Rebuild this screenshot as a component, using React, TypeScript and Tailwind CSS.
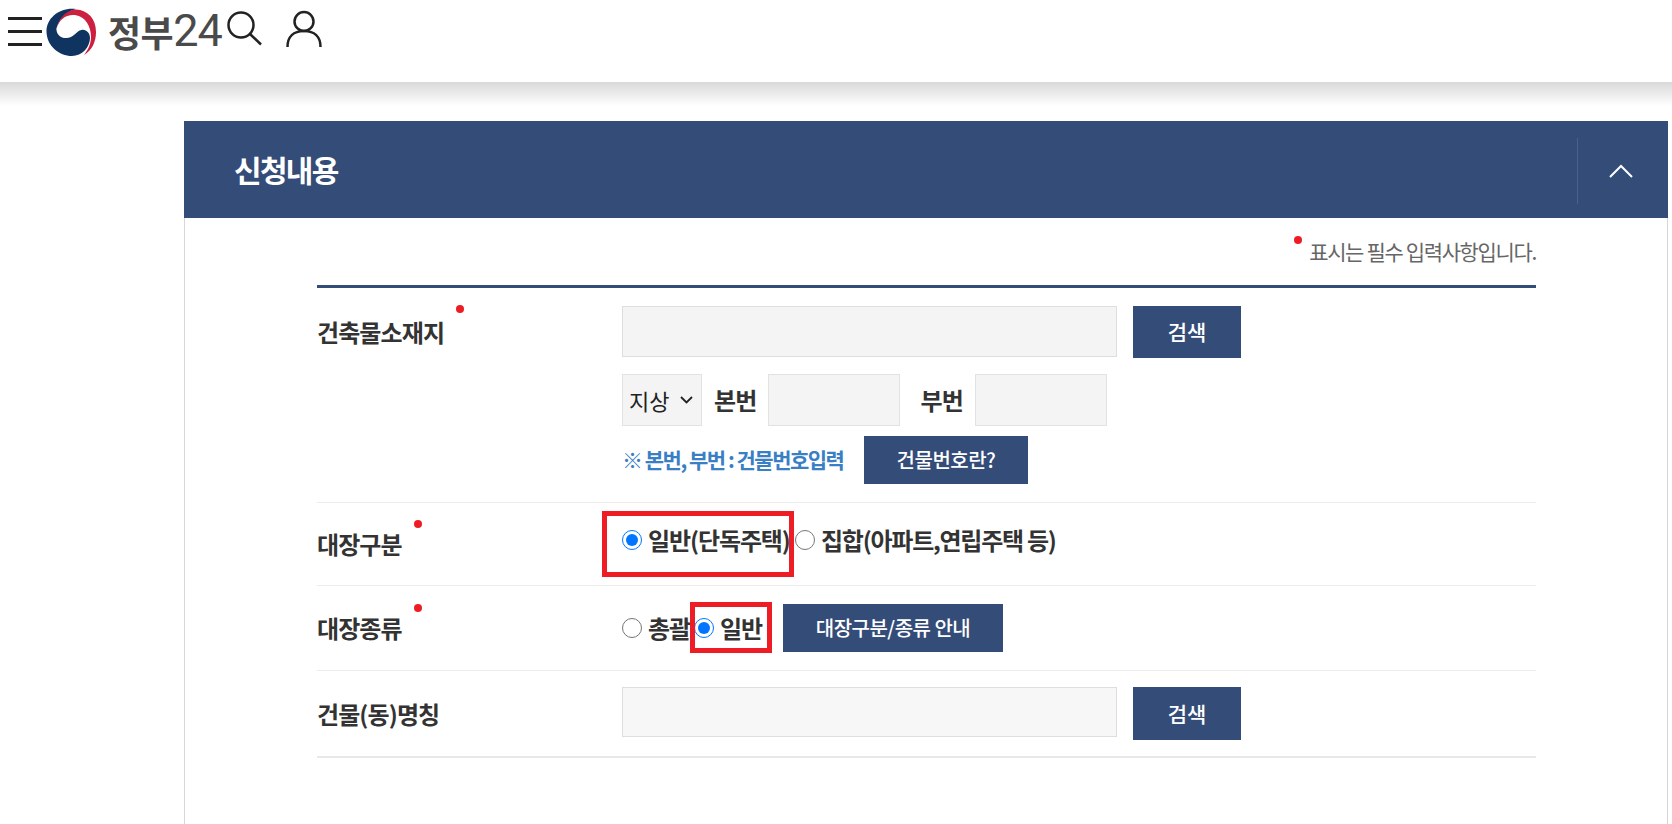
import React from "react";

const NAVY = "bg-[#344d78]";

const TaegeukLogo = () => (
  <svg width="52" height="48" viewBox="0 0 52 48" className="shrink-0">
    <path
      d="M30 1C14-1 0 10 .5 24 1 38 13 48 26 48c10 0 18-9 18-18 0-5-4-9-8.500-8C30 23 29 29 21 30c-6 .5-10-3-10.500-8C10 21 13 6 30 1Z"
      fill="#0f3460"
    />
    <path
      d="M10.500 21C13 9 21 2 30 1.500 42 2 50 11 50 24c0 10-4 18-12 23 4-5 7-11 7-18 0-12-7-22-18-22-8 0-14 5-16.500 14Z"
      fill="#cd1f3f"
    />
  </svg>
);

const RequiredDot = ({ className }: { className: string }) => (
  <span className={`absolute h-2 w-2 rounded-full bg-[#ee1c25] ${className}`} />
);

const RowLabel = ({ text, dot }: { text: string; dot?: string }) => (
  <div className="relative text-[24px] font-bold leading-[30px] tracking-[-0.9px] text-[#333]">
    {text}
    {dot && <RequiredDot className={dot} />}
  </div>
);

const Radio = ({ checked }: { checked?: boolean }) => (
  <input
    type="radio"
    checked={!!checked}
    readOnly
    className="m-0 h-5 w-5 shrink-0 accent-[#0075ff]"
  />
);

const FieldButton = ({ children, className }: { children: React.ReactNode; className: string }) => (
  <button className={`${NAVY} font-medium text-white ${className}`}>
    {children}
  </button>
);

const App = () => {
  return (
    <div className="h-screen overflow-hidden bg-white font-['Noto_Sans_CJK_KR','Noto_Sans',sans-serif]">
      {/* Top bar */}
      <header className="flex h-[82px] items-start bg-white pl-2 pt-2">
        <div className="mt-[9px] flex w-[34px] shrink-0 flex-col gap-[10px]">
          <span className="h-[3px] bg-[#222]" />
          <span className="h-[3px] bg-[#222]" />
          <span className="h-[3px] bg-[#222]" />
        </div>
        <div className="ml-1">
          <TaegeukLogo />
        </div>
        <div className="ml-[10px] mt-[1px] flex items-center text-[#4a4a4a]">
          <span className="text-[36px] font-semibold leading-[44px] tracking-[-0.5px]">정부</span>
          <span className="font-['Roboto',sans-serif] text-[45px] leading-[44px] tracking-[-1px]">24</span>
        </div>
        <svg width="36" height="36" viewBox="0 0 36 36" fill="none" stroke="#222" strokeWidth="2.500" className="ml-1 mt-[2px] shrink-0">
          <circle cx="15" cy="15" r="12.500" />
          <path d="M24 24l11 10.500" />
        </svg>
        <svg width="36" height="38" viewBox="0 0 36 38" fill="none" stroke="#222" strokeWidth="2.500" className="ml-6 mt-[2px] shrink-0">
          <circle cx="18" cy="11.500" r="9.500" />
          <path d="M1.500 37c0-10 6-16 16.500-16s16.500 6 16.500 16" />
        </svg>
      </header>
      <div className="h-6 bg-gradient-to-b from-[#d9d9d9] to-white" />

      {/* Panel */}
      <section className="ml-[184px] mt-[15px] h-[720px] w-[1484px] border-x border-[#d8d8d8]">
        <div className={`${NAVY} -mx-px flex h-[97px] items-center justify-between pl-[50px]`}>
          <h2 className="text-[30px] font-bold tracking-[-1.700px] text-white">신청내용</h2>
          <div className="mt-[3px] flex h-[66px] w-[91px] items-center justify-center border-l border-[#4a618a]">
            <svg width="24" height="14" viewBox="0 0 24 14" fill="none" stroke="#fff" strokeWidth="2" className="mr-[4px]">
              <path d="M1 13 12 2l11 11" />
            </svg>
          </div>
        </div>

        <div className="pl-[132px] pr-[131px]">
          <div className="flex h-[67px] items-end justify-end pb-[21px]">
            <p className="relative text-[21px] leading-[26px] tracking-[-1.350px] text-[#666]">
              <RequiredDot className="-left-[15px] -top-[2px]" />
              표시는 필수 입력사항입니다.
            </p>
          </div>

          <div className="border-t-[3px] border-[#344d78]">
            {/* 건축물소재지 */}
            <div className="grid grid-cols-[305px_1fr] border-b border-[#ececec] pb-[18px] pt-[18px]">
              <div className="pt-[11px]">
                <RowLabel text="건축물소재지" dot="left-[139px] -top-[12px]" />
              </div>
              <div className="flex flex-col">
                <div className="flex items-start gap-4">
                  <div className="h-[51px] w-[495px] border border-[#dedede] bg-[#f4f4f4]" />
                  <FieldButton className="h-[52px] w-[108px] text-[21px]">검색</FieldButton>
                </div>
                <div className="mt-4 flex h-[52px] items-center">
                  <div className="relative h-[52px] w-[80px]">
                    <select className="h-full w-full appearance-none border border-[#e2e2e2] bg-[#f4f4f4] pl-[6px] text-[22px] text-[#222]">
                      <option>지상</option>
                    </select>
                    <svg width="13" height="8" viewBox="0 0 13 8" fill="none" stroke="#222" strokeWidth="1.800" className="pointer-events-none absolute right-[9px] top-[22px]">
                      <path d="M1 1l5.500 5.500L12 1" />
                    </svg>
                  </div>
                  <span className="ml-3 text-[24px] font-bold tracking-[-0.9px] text-[#333]">본번</span>
                  <div className="ml-3 h-[52px] w-[132px] border border-[#e2e2e2] bg-[#f4f4f4]" />
                  <span className="ml-5 text-[24px] font-bold tracking-[-0.7px] text-[#333]">부번</span>
                  <div className="ml-3 h-[52px] w-[132px] border border-[#e2e2e2] bg-[#f4f4f4]" />
                </div>
                <div className="mt-[10px] flex h-[48px] items-center">
                  <span className="w-[242px] text-[21px] font-bold tracking-[-1.500px] text-[#3a7fc4]">
                    ※ 본번, 부번 : 건물번호입력
                  </span>
                  <FieldButton className="h-[48px] w-[164px] text-[20px] tracking-[-0.5px]">건물번호란?</FieldButton>
                </div>
              </div>
            </div>

            {/* 대장구분 */}
            <div className="grid h-[83px] grid-cols-[305px_1fr] items-center border-b border-[#ececec]">
              <RowLabel text="대장구분" dot="left-[97px] -top-[9px]" />
              <div className="mb-2 flex items-center text-[24px] font-bold leading-[34px] tracking-[-1.100px] text-[#333]">
                <label className="relative flex w-[173px] items-center gap-[6px] whitespace-nowrap">
                  <Radio checked />
                  일반(단독주택)
                  <span className="absolute -left-[20px] -top-[12px] h-[66px] w-[192px] border-[5px] border-[#ee1c25]" />
                </label>
                <label className="flex items-center gap-[6px] tracking-[-1.250px]">
                  <Radio />
                  집합(아파트,연립주택 등)
                </label>
              </div>
            </div>

            {/* 대장종류 */}
            <div className="grid h-[85px] grid-cols-[305px_1fr] items-center border-b border-[#ececec]">
              <RowLabel text="대장종류" dot="left-[97px] -top-[9px]" />
              <div className="flex items-center text-[24px] font-bold leading-[34px] tracking-[-1.100px] text-[#333]">
                <label className="flex w-[72px] items-center gap-[6px] whitespace-nowrap">
                  <Radio />
                  총괄
                </label>
                <label className="relative flex w-[89px] items-center gap-[6px] whitespace-nowrap">
                  <Radio checked />
                  일반
                  <span className="absolute -left-[4px] -top-[9px] h-[51px] w-[82px] border-[5px] border-[#ee1c25]" />
                </label>
                <FieldButton className="h-[48px] w-[220px] text-[20px] tracking-[-0.5px]">대장구분/종류 안내</FieldButton>
              </div>
            </div>

            {/* 건물(동)명칭 */}
            <div className="grid h-[87px] grid-cols-[305px_1fr] items-center border-b-2 border-[#e8e8e8]">
              <RowLabel text="건물(동)명칭" />
              <div className="flex items-start gap-4 self-start pt-4">
                <div className="h-[50px] w-[495px] border border-[#dedede] bg-[#f7f7f7]" />
                <FieldButton className="h-[53px] w-[108px] text-[21px]">검색</FieldButton>
              </div>
            </div>
          </div>
        </div>
      </section>
    </div>
  );
};

export default App;
